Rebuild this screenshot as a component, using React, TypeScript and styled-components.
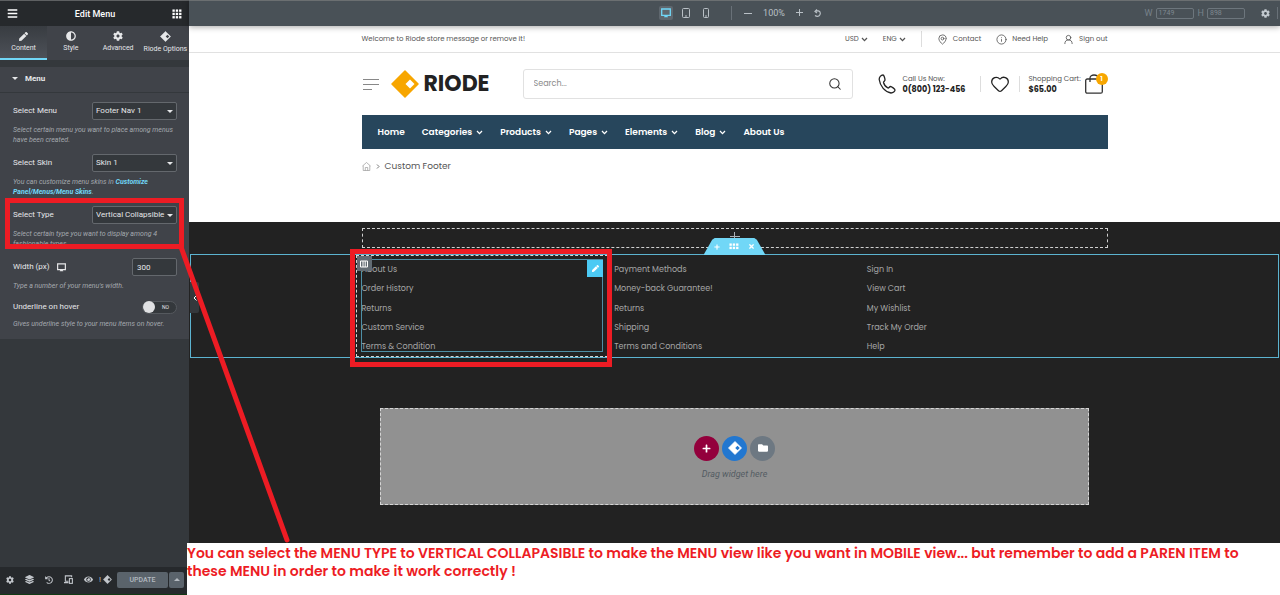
import React from "react";
import styled, { createGlobalStyle, css } from "styled-components";
import { FaAdjust, FaBars, FaCog, FaEye, FaFolder, FaHistory, FaLayerGroup, FaPen, FaPlus, FaTimes } from "react-icons/fa";
import { Heart, Info, MapPin, Search, UserRound } from "lucide-react";

const ui = `Roboto, "Liberation Sans", sans-serif`;
const shop = `Poppins, Inter, "Open Sans", sans-serif`;
const red = "#ed1c24";
const cyan = "#71d7f7";

const Global = createGlobalStyle`
  *, *::before, *::after { box-sizing: border-box; }
  body { margin: 0; background: #fff; font-family: ${ui}; }
  button, input, select { font: inherit; color: inherit; margin: 0; padding: 0; border: 0; background: none; }
  a { color: inherit; text-decoration: none; }
  ul, p { margin: 0; padding: 0; list-style: none; }
  svg { display: block; flex: none; }
`;

const Editor = styled.div`
  position: relative;
  display: grid;
  grid-template-columns: 189px minmax(0, 1fr);
  min-height: 100vh;
`;

/* Side panel */
const Panel = styled.aside`
  display: flex;
  flex-direction: column;
  background: #34383c;
  color: #e6e7e9;
  font-size: 8px;
  line-height: 10px;
`;
const PanelHeader = styled.header`
  display: flex;
  align-items: center;
  justify-content: space-between;
  height: 26px;
  padding: 0 7px;
  background: #26292c;
  border-top: 1px solid #5e6062;
  color: #fff;
  font-size: 9px;
  font-weight: 500;
`;
const IconButton = styled.button`
  display: grid;
  place-items: center;
  color: inherit;
`;
const Tabs = styled.nav`
  display: grid;
  grid-template-columns: repeat(4, 1fr);
  height: 34px;
  background: #404349;
`;
const Tab = styled.button<{ $active?: boolean }>`
  display: flex;
  flex-direction: column;
  align-items: center;
  justify-content: center;
  gap: 2px;
  font-size: 7px;
  white-space: nowrap;
  border-bottom: 2px solid transparent;
  ${(p) => p.$active && css`
    background: linear-gradient(#383c41, #4d5158);
    border-bottom-color: ${cyan};
  `}
`;
const SectionTitle = styled.button`
  display: flex;
  align-items: center;
  gap: 7px;
  height: 26px;
  margin-top: 7px;
  padding: 0 12px 2px;
  background: #404349;
  border-bottom: 1px solid #34383c;
  font-size: 8px;
  font-weight: 700;
`;
const Controls = styled.div`
  display: flex;
  flex-direction: column;
  gap: 9px;
  padding: 9px 12px 10px 13px;
  background: #404349;
`;
const Control = styled.div`
  position: relative;
  display: flex;
  flex-direction: column;
  gap: 5px;
`;
const ControlRow = styled.div<{ $short?: boolean }>`
  display: flex;
  align-items: center;
  justify-content: space-between;
  height: ${(p) => (p.$short ? 14 : 18)}px;
`;
const Label = styled.label`
  display: flex;
  align-items: center;
  gap: 7px;
`;
const Hint = styled.p`
  color: #a4a9af;
  font-size: 7px;
  font-style: italic;
  a { color: ${cyan}; font-weight: 700; }
`;
const SelectBox = styled.span`
  position: relative;
  width: 85px;
  svg { position: absolute; right: 4px; top: 8px; pointer-events: none; }
`;
const Select = styled.select`
  display: block;
  appearance: none;
  width: 100%;
  height: 18px;
  padding: 0 3px;
  background: #34383c;
  border: 1px solid #64686d;
  border-radius: 2px;
`;
const NumberInput = styled.input`
  width: 45px;
  height: 18px;
  padding: 0 4px;
  background: #34383c;
  border: 1px solid #64686d;
  border-radius: 2px;
`;
const Switch = styled.span`
  position: relative;
  display: flex;
  align-items: center;
  justify-content: flex-end;
  width: 35px;
  height: 13px;
  padding-right: 7px;
  border-radius: 7px;
  border: 1px solid #55595e;
  background: #34383c;
  font-size: 5px;
  input {
    position: absolute;
    left: 0;
    top: -1px;
    width: 12px;
    height: 12px;
    appearance: none;
    border-radius: 50%;
    background: #e0e1e3;
  }
`;
const Callout = styled.div`
  position: absolute;
  border: 5px solid ${red};
  pointer-events: none;
`;
const ControlCallout = styled(Callout)`
  inset: -8px -7px 0 -8px;
`;
const PanelFooter = styled.footer`
  display: flex;
  align-items: center;
  justify-content: space-between;
  height: 28px;
  margin-top: auto;
  padding: 0 5px 2px 6px;
  background: #26292c;
  border-bottom: 1px solid #123a14;
  color: #c2c6cb;
`;
const FooterTools = styled.div`
  display: flex;
  align-items: center;
  gap: 11px;
`;
const RiodeTool = styled.button`
  display: flex;
  align-items: center;
  gap: 2px;
  margin-left: -5px;
`;
const UpdateGroup = styled.div`
  display: flex;
  gap: 1px;
  height: 16px;
  button { background: #5a636b; color: #b4bac0; font-size: 7px; font-weight: 500; border-radius: 2px; }
  button:first-child { width: 51px; }
  button:last-child { display: grid; place-items: center; width: 15px; }
`;

/* Preview */
const Preview = styled.main`
  display: flex;
  flex-direction: column;
  min-width: 0;
`;
const DeviceBar = styled.div`
  position: relative;
  display: grid;
  grid-template-columns: 1fr auto 1fr;
  align-items: center;
  height: 26px;
  background: #495157;
  border-top: 1px solid #6b6f71;
  box-shadow: 0 1px 6px rgba(0, 0, 0, 0.35);
  color: #b9c0c6;
  font-size: 9px;
`;
const DeviceTools = styled.div`
  grid-column: 2;
  display: flex;
  align-items: center;
  gap: 11px;
  padding: 0 0 2px 11px;
`;
const Devices = styled.div`
  display: flex;
  align-items: center;
  gap: 6px;
  padding-right: 18px;
  margin-right: 1px;
  border-right: 1px solid #697178;
  button { width: 14px; height: 14px; }
  button:first-child { background: #5f676e; color: ${cyan}; border-radius: 2px; }
`;
const SizeFields = styled.div`
  display: flex;
  align-items: center;
  justify-content: flex-end;
  gap: 4px;
  padding-bottom: 1px;
  color: #77818a;
  label { display: flex; align-items: center; gap: 3px; }
  input { width: 38px; height: 11px; padding-left: 2px; border: 1px solid #6d767d; border-radius: 2px; font-size: 7px; }
  input::placeholder { color: #7e8890; }
`;
const Settings = styled.button`
  display: flex;
  align-items: center;
  height: 12px;
  margin: 0 2px 0 12px;
  color: #c2c9cf;
  border-right: 1px solid #697178;
  padding-right: 7px;
`;
const Wrap = styled.div`
  width: 100%;
  max-width: 746px;
  margin: 0 auto;
`;
const Store = styled.div`
  height: 196px;
  background: #fff;
  color: #555;
  font-family: ${shop};
  font-size: 8px;
  line-height: 12px;
`;
const Welcome = styled.div`
  border-bottom: 1px solid #e1e1e1;
  font-size: 7px;
`;
const WelcomeRow = styled(Wrap)`
  display: flex;
  align-items: center;
  justify-content: space-between;
  height: 26px;
`;
const Links = styled.div`
  display: flex;
  align-items: center;
  gap: 15px;
`;
const IconLink = styled.a`
  display: flex;
  align-items: center;
  gap: 5px;
`;
const Currency = styled(IconLink)`
  gap: 2px;
`;
const Rule = styled.span`
  width: 1px;
  height: 16px;
  background: #ddd;
`;
const HeaderRow = styled(Wrap)`
  display: flex;
  align-items: center;
  height: 62px;
`;
const Logo = styled.a`
  display: flex;
  align-items: center;
  gap: 5px;
  width: 132px;
  margin-left: 11px;
  color: #222;
  font-size: 22px;
  font-weight: 700;
`;
const SearchForm = styled.form`
  display: flex;
  align-items: center;
  flex: 1;
  height: 30px;
  padding: 0 10px;
  border: 1px solid #e1e1e1;
  border-radius: 3px;
  color: #333;
  input { flex: 1; min-width: 0; outline: 0; }
  input::placeholder { color: #8a8a8a; opacity: 1; }
`;
const Contact = styled.div`
  display: flex;
  align-items: center;
  gap: 9px;
  width: 255px;
  padding-left: 25px;
  color: #222;
`;
const TwoLine = styled.a`
  display: flex;
  flex-direction: column;
  font-size: 7px;
  line-height: 11px;
  white-space: nowrap;
  color: #555;
  strong { color: #222; font-size: 8px; font-weight: 700; }
`;
const Call = styled(TwoLine)`
  width: 68px;
  margin-left: -2px;
`;
const Cart = styled(TwoLine)`
  width: 49px;
`;
const Bag = styled.a`
  position: relative;
  margin-left: -2px;
  span {
    position: absolute;
    right: -5px;
    top: -1px;
    width: 12px;
    height: 12px;
    border-radius: 50%;
    background: #f7a600;
    color: #fff;
    font-size: 7px;
    font-weight: 600;
    text-align: center;
  }
`;
const NavBar = styled(Wrap).attrs({ as: "nav" })`
  display: flex;
  align-items: center;
  gap: 17px;
  height: 34px;
  padding: 0 16px;
  background: #27465c;
  color: #fff;
  font-size: 9px;
  font-weight: 600;
`;
const NavLink = styled.a`
  display: flex;
  align-items: center;
  gap: 4px;
`;
const Breadcrumb = styled(Wrap)`
  display: flex;
  align-items: center;
  gap: 5px;
  height: 34px;
  font-size: 9px;
`;
const Canvas = styled.div`
  flex: 1;
  padding: 6px 0 38px;
  background: #222;
  color: #a6a6a6;
  font-family: ${shop};
  font-size: 8px;
  line-height: 8px;
`;
const AddRow = styled(Wrap)`
  display: flex;
  justify-content: center;
  height: 20px;
  border: 1px dashed #d0d0d0;
  color: #aab0b6;
  padding-top: 3px;
`;
const FooterSection = styled.section`
  position: relative;
  margin: 6px 1px 0;
  border: 1px solid #5cb3d0;
`;
const SectionHandle = styled.div`
  position: absolute;
  left: 50%;
  top: -17px;
  width: 62px;
  height: 17px;
  margin-left: -31px;
  display: flex;
  align-items: center;
  justify-content: center;
  gap: 9px;
  background: ${cyan};
  clip-path: polygon(0 100%, 14% 10%, 18% 0, 82% 0, 86% 10%, 100% 100%);
  color: #fff;
`;
const Columns = styled.div`
  display: grid;
  grid-template-columns: repeat(3, minmax(0, 1fr));
  width: 100%;
  max-width: 758px;
  margin: 0 auto;
`;
const Column = styled.div<{ $selected?: boolean }>`
  position: relative;
  padding: 3px 4px 4px;
  border: 1px ${(p) => (p.$selected ? "dashed #d5d5d5" : "solid transparent")};
`;
const FooterMenu = styled.ul<{ $selected?: boolean }>`
  display: flex;
  flex-direction: column;
  justify-content: space-between;
  min-height: 93px;
  padding: 6px 0 0;
  border: 1px solid ${(p) => (p.$selected ? "#4e8fa6" : "transparent")};
`;
const ColumnCallout = styled(Callout)`
  inset: -7px -5px -11px -7px;
`;
const ColumnHandle = styled.button`
  position: absolute;
  left: 0;
  top: 0;
  display: grid;
  place-items: center;
  width: 15px;
  height: 15px;
  background: #626b73;
  color: #fff;
`;
const EditHandle = styled.button`
  position: absolute;
  right: 4px;
  top: 4px;
  display: grid;
  place-items: center;
  width: 16px;
  height: 17px;
  background: #4ccaf4;
  color: #fff;
`;
const DropZone = styled.div`
  display: flex;
  flex-direction: column;
  align-items: center;
  justify-content: center;
  gap: 9px;
  max-width: 709px;
  height: 97px;
  margin: 50px auto 0;
  background: #919191;
  border: 1px dashed #d5d5d5;
  color: #545c63;
  font-family: ${ui};
  font-size: 9px;
  font-style: italic;
`;
const DropActions = styled.div`
  display: flex;
  gap: 3px;
`;
const RoundButton = styled.button<{ $color: string }>`
  display: grid;
  place-items: center;
  width: 25px;
  height: 25px;
  border-radius: 50%;
  background: ${(p) => p.$color};
  color: #fff;
`;
const Note = styled.p`
  position: relative;
  min-height: 52px;
  margin-left: -2px;
  padding-top: 1px;
  background: #fff;
  color: ${red};
  font-family: Poppins, Lato, sans-serif;
  font-size: 14px;
  font-weight: 600;
  line-height: 18px;
`;
const CollapseHandle = styled.button`
  position: absolute;
  left: 190px;
  top: 282px;
  display: grid;
  place-items: center;
  width: 9px;
  height: 31px;
  background: #34383c;
  color: #fff;
  border-radius: 0 2px 2px 0;
`;
const Pointer = styled.svg`
  position: absolute;
  left: 0;
  top: 0;
  pointer-events: none;
`;

const Caret = ({ up }: { up?: boolean }) => (
  <svg width="6" height="3" viewBox="0 0 6 3"><path d={up ? "M0 3L3 0L6 3Z" : "M0 0H6L3 3Z"} fill="currentColor" /></svg>
);
const Chevron = () => (
  <svg width="7" height="5" viewBox="0 0 7 5" fill="none" stroke="currentColor" strokeWidth="1.3"><path d="M1 1L3.5 3.6L6 1" /></svg>
);
const Dots = ({ rows = 3, size = 10 }: { rows?: number; size?: number }) => (
  <svg width={size} height={(size * rows) / 3} viewBox={`0 0 9 ${rows * 3}`} fill="currentColor">
    {Array.from({ length: rows * 3 }, (_, i) => (
      <rect key={i} x={(i % 3) * 3 + 0.4} y={Math.floor(i / 3) * 3 + 0.4} width="2.1" height="2.1" />
    ))}
  </svg>
);
const Diamond = ({ size, hole = "#404349" }: { size: number; hole?: string }) => (
  <svg width={size} height={size} viewBox="0 0 28 28">
    <path d="M14 1L27 14L14 27L1 14Z" fill="currentColor" stroke="currentColor" strokeWidth="1.5" strokeLinejoin="round" />
    <path d="M19 9.5L23.5 14L19 18.5L14.5 14Z" fill={hole} />
  </svg>
);
const Monitor = ({ size = 9 }: { size?: number }) => (
  <svg width={size} height={size} viewBox="0 0 10 10"><path d="M.7 1H9.3V7.3H.7Z" fill="none" stroke="currentColor" strokeWidth="1.3" /><path d="M3 9.3H7L6 7H4Z" fill="currentColor" /></svg>
);
const Handheld = ({ w }: { w: number }) => (
  <svg width={w} height="10" viewBox={`0 0 ${w} 10`} fill="none" stroke="currentColor"><rect x=".5" y=".5" width={w - 1} height="9" rx="1" /><path d={`M${w / 2 - 1} 8H${w / 2 + 1}`} /></svg>
);
const Responsive = () => (
  <svg width="9" height="9" viewBox="0 0 10 10" fill="none" stroke="currentColor" strokeWidth="1.2"><path d="M8.5 2.5V1H1.5V7H5M0 8.5H5" /><rect x="6" y="4" width="3.3" height="5.3" /></svg>
);
const PhoneIcon = () => (
  <svg width="18" height="20" viewBox="0 0 18 20" fill="none" stroke="currentColor" strokeWidth="1.3" strokeLinejoin="round">
    <path d="M5 1C3 1 1 3 1.200 5.500C2 12 7 18 13 19C15 19 17 17.500 17 16C17 15 13.500 12.500 12.500 12.500C11.500 12.500 11 14.200 10 14C8 13 6 10.500 5.500 8.500C5.300 7.500 7 7 7 6C7 4.500 6 1 5 1Z" />
  </svg>
);
const BagIcon = () => (
  <svg width="18" height="20" viewBox="0 0 18 20" fill="none" stroke="#333" strokeWidth="1.3">
    <rect x=".7" y="5" width="16.600" height="14.200" rx="1.500" /><path d="M5 8V4C5 0 13 0 13 4V8" />
  </svg>
);
const HouseIcon = () => (
  <svg width="9" height="9" viewBox="0 0 9 9" fill="none" stroke="#999" strokeWidth=".7"><path d="M.5 4L4.500.500L8.500 4M1.200 3.500V8.500H7.800V3.500M3.300 8.500V5.500H5.700V8.500" /></svg>
);

const nav = ["Home", "Categories", "Products", "Pages", "Elements", "Blog", "About Us"];
const menus = [
  ["About Us", "Order History", "Returns", "Custom Service", "Terms & Condition"],
  ["Payment Methods", "Money-back Guarantee!", "Returns", "Shipping", "Terms and Conditions"],
  ["Sign In", "View Cart", "My Wishlist", "Track My Order", "Help"],
];

type SelectControlProps = { id: string; label: string; value: string; children: React.ReactNode; marked?: boolean };
const SelectControl = ({ id, label, value, children, marked }: SelectControlProps) => (
  <Control>
    <ControlRow>
      <Label htmlFor={id}>{label}</Label>
      <SelectBox><Select id={id}><option>{value}</option></Select><Caret /></SelectBox>
    </ControlRow>
    <Hint>{children}</Hint>
    {marked && <ControlCallout />}
  </Control>
);

export default function App() {
  return (
    <Editor>
      <Global />
      <Panel>
        <PanelHeader>
          <IconButton aria-label="Menu"><FaBars size={11} /></IconButton>
          Edit Menu
          <IconButton aria-label="Widgets"><Dots /></IconButton>
        </PanelHeader>
        <Tabs>
          <Tab $active><FaPen size={9} />Content</Tab>
          <Tab><FaAdjust size={10} />Style</Tab>
          <Tab><FaCog size={10} />Advanced</Tab>
          <Tab><Diamond size={11} />Riode Options</Tab>
        </Tabs>
        <SectionTitle><Caret />Menu</SectionTitle>
        <Controls>
          <SelectControl id="menu" label="Select Menu" value="Footer Nav 1">
            Select certain menu you want to place among menus have been created.
          </SelectControl>
          <SelectControl id="skin" label="Select Skin" value="Skin 1">
            You can customize menu skins in <a href="#skins">Customize Panel/Menus/Menu Skins</a>.
          </SelectControl>
          <SelectControl id="type" label="Select Type" value="Vertical Collapsible" marked>
            Select certain type you want to display among 4 fashionable types.
          </SelectControl>
          <Control>
            <ControlRow>
              <Label htmlFor="width">Width (px) <Monitor /></Label>
              <NumberInput id="width" defaultValue="300" />
            </ControlRow>
            <Hint>Type a number of your menu's width.</Hint>
          </Control>
          <Control>
            <ControlRow $short>
              <Label htmlFor="underline">Underline on hover</Label>
              <Switch><input id="underline" type="checkbox" />NO</Switch>
            </ControlRow>
            <Hint>Gives underline style to your menu items on hover.</Hint>
          </Control>
        </Controls>
        <PanelFooter>
          <FooterTools>
            <IconButton aria-label="Settings"><FaCog size={8} /></IconButton>
            <IconButton aria-label="Navigator"><FaLayerGroup size={9} /></IconButton>
            <IconButton aria-label="History"><FaHistory size={8} /></IconButton>
            <IconButton aria-label="Responsive mode"><Responsive /></IconButton>
            <IconButton aria-label="Preview"><FaEye size={9} /></IconButton>
            <RiodeTool aria-label="Riode">!<Diamond size={9} hole="#26292c" /></RiodeTool>
          </FooterTools>
          <UpdateGroup>
            <button>UPDATE</button>
            <button aria-label="Save options"><Caret up /></button>
          </UpdateGroup>
        </PanelFooter>
      </Panel>

      <Preview>
        <DeviceBar>
          <DeviceTools>
            <Devices>
              <IconButton aria-label="Desktop"><Monitor size={10} /></IconButton>
              <IconButton aria-label="Tablet"><Handheld w={8} /></IconButton>
              <IconButton aria-label="Mobile"><Handheld w={6} /></IconButton>
            </Devices>
            <IconButton aria-label="Zoom out"><svg width="8" height="8" stroke="currentColor"><path d="M0 4.500H8" /></svg></IconButton>
            <span>100%</span>
            <IconButton aria-label="Zoom in"><svg width="7" height="7" stroke="currentColor"><path d="M0 3.500H7M3.500 0V7" /></svg></IconButton>
            <IconButton aria-label="Reset zoom"><svg width="7" height="8" fill="none" stroke="currentColor" strokeWidth="1.200"><path d="M1 6.500C4 8.500 6.500 6.500 6.300 4C6 1.500 3 1.500 1 2.500M3 .5L1 2.500L3 4" /></svg></IconButton>
          </DeviceTools>
          <SizeFields>
            <label>W <input placeholder="1749" /></label>
            <label>H <input placeholder="898" /></label>
            <Settings aria-label="Preview settings"><FaCog size={9} /></Settings>
          </SizeFields>
        </DeviceBar>

        <Store>
          <Welcome>
            <WelcomeRow>
              <span>Welcome to Riode store message or remove it!</span>
              <Links>
                <Currency href="#usd">USD <Chevron /></Currency>
                <Currency href="#eng">ENG <Chevron /></Currency>
                <Rule />
                <IconLink href="#contact"><MapPin size={11} strokeWidth={1.8} />Contact</IconLink>
                <IconLink href="#help"><Info size={11} strokeWidth={1.8} />Need Help</IconLink>
                <IconLink href="#out"><UserRound size={11} strokeWidth={1.8} />Sign out</IconLink>
              </Links>
            </WelcomeRow>
          </Welcome>
          <HeaderRow>
            <IconButton aria-label="Store menu">
              <svg width="18" height="16" stroke="#888"><path d="M1 3.500H17M1 8.500H17M1 13.500H10" /></svg>
            </IconButton>
            <Logo href="#home"><svg width="28" height="28" viewBox="0 0 28 28"><path d="M14 1L27 14L14 27L1 14Z" fill="#f7a600" stroke="#f7a600" strokeWidth="1.500" strokeLinejoin="round" /><path d="M19 9.500L23.500 14L19 18.500L14.500 14Z" fill="#fff" /></svg>RIODE</Logo>
            <SearchForm>
              <input aria-label="Search" placeholder="Search..." />
              <IconButton type="button" aria-label="Submit search"><Search size={14} strokeWidth={1.8} /></IconButton>
            </SearchForm>
            <Contact>
              <PhoneIcon />
              <Call href="#call">Call Us Now:<strong>0(800) 123-456</strong></Call>
              <Rule />
              <a href="#wishlist" aria-label="Wishlist"><Heart size={20} strokeWidth={1.5} /></a>
              <Rule />
              <Cart href="#cart">Shopping Cart:<strong>$65.00</strong></Cart>
              <Bag href="#bag"><BagIcon /><span>1</span></Bag>
            </Contact>
          </HeaderRow>
          <NavBar>
            {nav.map((item, i) => (
              <NavLink href="#nav" key={item}>{item}{i > 0 && i < 6 && <Chevron />}</NavLink>
            ))}
          </NavBar>
          <Breadcrumb>
            <HouseIcon />
            <svg width="4" height="5" fill="none" stroke="#777"><path d="M1 .5L3 2.500L1 4.500" /></svg>
            Custom Footer
          </Breadcrumb>
        </Store>

        <Canvas>
          <AddRow><svg width="10" height="10" stroke="currentColor"><path d="M0 4.500H10M4.500 0V10" /></svg></AddRow>
          <FooterSection>
            <SectionHandle><FaPlus size={6} /><Dots rows={2} size={10} /><FaTimes size={7} /></SectionHandle>
            <Columns>
              {menus.map((items, i) => (
                <Column key={items[0]} $selected={i === 0}>
                  <FooterMenu $selected={i === 0}>
                    {items.map((item) => <li key={item}><a href="#item">{item}</a></li>)}
                  </FooterMenu>
                  {i === 0 && (
                    <>
                      <ColumnHandle aria-label="Edit column">
                        <svg width="8" height="8" fill="none" stroke="currentColor"><path d="M.5 1H7.500V7H.5ZM3 1V7M5.200 1V7" /></svg>
                      </ColumnHandle>
                      <EditHandle aria-label="Edit widget"><FaPen size={7} /></EditHandle>
                      <ColumnCallout />
                    </>
                  )}
                </Column>
              ))}
            </Columns>
          </FooterSection>
          <DropZone>
            <DropActions>
              <RoundButton $color="#93003c" aria-label="Add section"><FaPlus size={9} /></RoundButton>
              <RoundButton $color="#2277d0" aria-label="Riode templates"><Diamond size={14} hole="#2277d0" /></RoundButton>
              <RoundButton $color="#6d7882" aria-label="Template library"><FaFolder size={10} /></RoundButton>
            </DropActions>
            Drag widget here
          </DropZone>
        </Canvas>
        <Note>
          You can select the MENU TYPE to VERTICAL COLLAPASIBLE to make the MENU view like you want in MOBILE view... but remember to add a PAREN ITEM to<br />
          these MENU in order to make it work correctly !
        </Note>
      </Preview>
      <CollapseHandle aria-label="Hide panel">
        <svg width="4" height="6" fill="none" stroke="currentColor"><path d="M3.500.5L1 3L3.500 5.500" /></svg>
      </CollapseHandle>
      <Pointer width="300" height="550"><path d="M181 247L287 540" stroke={red} strokeWidth="5" strokeLinecap="round" /></Pointer>
    </Editor>
  );
}
